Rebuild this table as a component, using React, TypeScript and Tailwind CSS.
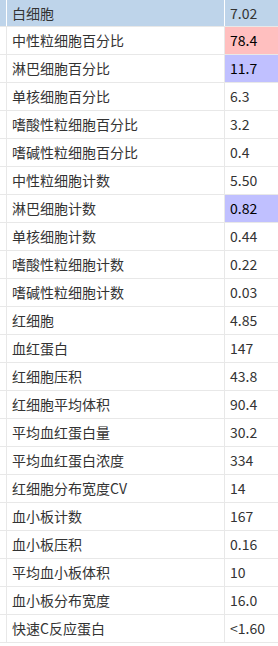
import React from 'react';

type Row = { name: string; value: string; tone?: 'head' | 'high' | 'low' };

const rows: Row[] = [
  { name: '白细胞', value: '7.02', tone: 'head' },
  { name: '中性粒细胞百分比', value: '78.4', tone: 'high' },
  { name: '淋巴细胞百分比', value: '11.7', tone: 'low' },
  { name: '单核细胞百分比', value: '6.3' },
  { name: '嗜酸性粒细胞百分比', value: '3.2' },
  { name: '嗜碱性粒细胞百分比', value: '0.4' },
  { name: '中性粒细胞计数', value: '5.50' },
  { name: '淋巴细胞计数', value: '0.82', tone: 'low' },
  { name: '单核细胞计数', value: '0.44' },
  { name: '嗜酸性粒细胞计数', value: '0.22' },
  { name: '嗜碱性粒细胞计数', value: '0.03' },
  { name: '红细胞', value: '4.85' },
  { name: '血红蛋白', value: '147' },
  { name: '红细胞压积', value: '43.8' },
  { name: '红细胞平均体积', value: '90.4' },
  { name: '平均血红蛋白量', value: '30.2' },
  { name: '平均血红蛋白浓度', value: '334' },
  { name: '红细胞分布宽度CV', value: '14' },
  { name: '血小板计数', value: '167' },
  { name: '血小板压积', value: '0.16' },
  { name: '平均血小板体积', value: '10' },
  { name: '血小板分布宽度', value: '16.0' },
  { name: '快速C反应蛋白', value: '<1.60' },
];

export default function App() {
  return (
    <div className="w-[278px] h-[646px] bg-white font-['Noto_Sans_CJK_SC','Noto_Sans',sans-serif] text-[14px] text-[#333] overflow-hidden">
      {rows.map((r, i) => {
        const head = r.tone === 'head';
        const sep = head ? 'border-white' : 'border-[#e8e8e8]';
        const valBg =
          r.tone === 'high' ? 'bg-[#ffbfbf] text-black' : r.tone === 'low' ? 'bg-[#c0c0ff] text-black' : '';
        return (
          <div
            key={r.name}
            className={`flex border-b border-[#e8e8e8] ${head ? 'h-[27px] bg-[#bed4ea]' : 'h-[28px]'}`}
          >
            <div className={`w-[7px] shrink-0 border-r ${sep}`} />
            <div className={`flex-1 flex items-center pl-[5px] border-r ${sep}`}>{r.name}</div>
            <div className={`w-[53px] shrink-0 flex items-center pl-[5px] ${valBg}`}>{r.value}</div>
          </div>
        );
      })}
    </div>
  );
}
